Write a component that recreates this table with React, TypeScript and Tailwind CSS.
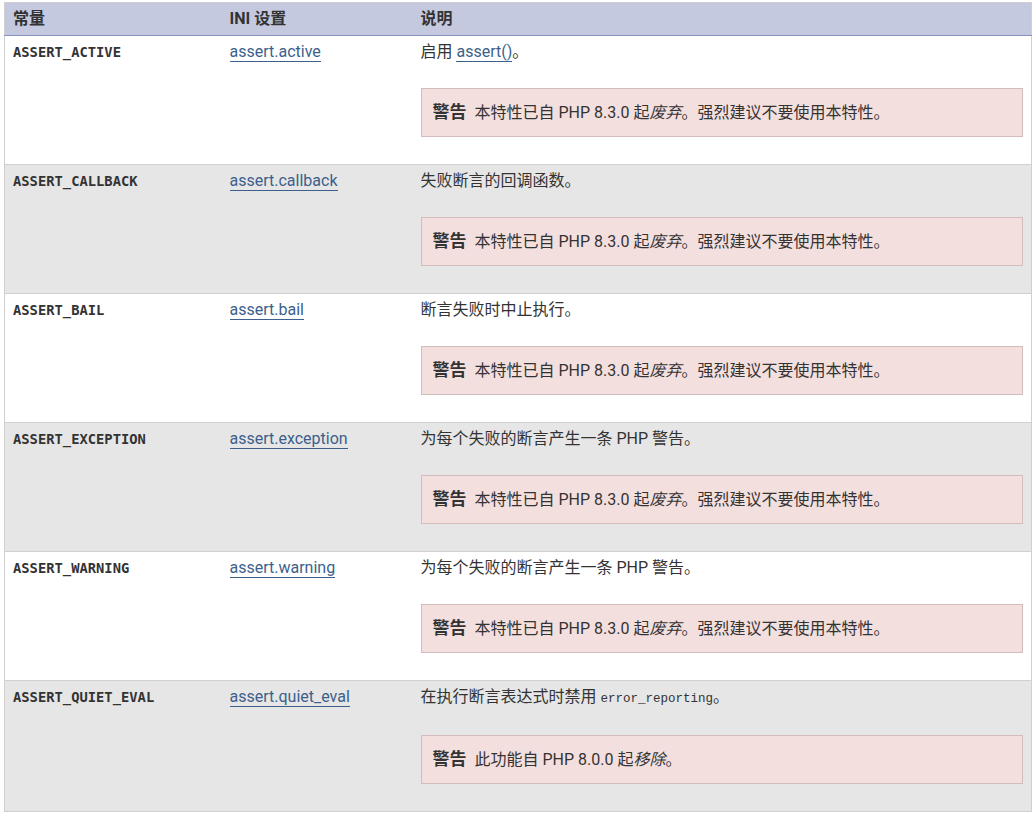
import React from 'react';

interface Row {
  name: string;
  ini: string;
  desc: React.ReactNode;
  warning: React.ReactNode;
}

const deprecated = (
  <>
    本特性已自 PHP 8.3.0 起<em>废弃</em>。强烈建议不要使用本特性。
  </>
);

const rows: Row[] = [
  {
    name: 'ASSERT_ACTIVE',
    ini: 'assert.active',
    desc: (
      <>
        启用 <Link>assert()</Link>。
      </>
    ),
    warning: deprecated,
  },
  { name: 'ASSERT_CALLBACK', ini: 'assert.callback', desc: '失败断言的回调函数。', warning: deprecated },
  { name: 'ASSERT_BAIL', ini: 'assert.bail', desc: '断言失败时中止执行。', warning: deprecated },
  { name: 'ASSERT_EXCEPTION', ini: 'assert.exception', desc: '为每个失败的断言产生一条 PHP 警告。', warning: deprecated },
  { name: 'ASSERT_WARNING', ini: 'assert.warning', desc: '为每个失败的断言产生一条 PHP 警告。', warning: deprecated },
  {
    name: 'ASSERT_QUIET_EVAL',
    ini: 'assert.quiet_eval',
    desc: (
      <>
        在执行断言表达式时禁用{' '}
        <code className="text-[12.5px] font-['Liberation_Mono',monospace]">error_reporting</code>。
      </>
    ),
    warning: (
      <>
        此功能自 PHP 8.0.0 起<em>移除</em>。
      </>
    ),
  },
];

function Link({ children }: { children: React.ReactNode }) {
  return <a className="text-[#3d5f8c] border-b border-[#3d5f8c] cursor-pointer">{children}</a>;
}

export default function App() {
  return (
    <div className="min-h-screen bg-white pt-[2px] pl-[4px] font-['Roboto','Noto_Sans_CJK_SC',sans-serif] text-[16px] leading-6 text-[#333]">
      <table className="w-[1028px] table-fixed border-collapse border border-[#d0d0d0]">
        <colgroup>
          <col className="w-[217px]" />
          <col className="w-[191px]" />
          <col />
        </colgroup>
        <thead>
          <tr className="bg-[#c4c9df] border-b border-[#8892bf]">
            <th className="text-left font-bold px-[8px] py-[4px]">常量</th>
            <th className="text-left font-bold px-[8px] py-[4px]">INI 设置</th>
            <th className="text-left font-bold px-[8px] py-[4px]">说明</th>
          </tr>
        </thead>
        <tbody>
          {rows.map((row, i) => (
            <tr
              key={row.name}
              className={`border-b border-[#d0d0d0] align-top ${i % 2 === 1 ? 'bg-[#e6e6e6]' : 'bg-white'}`}
            >
              <td className="px-[8px] pt-[4px] pb-[3px]">
                <strong className="text-[13.8px] font-bold font-['DejaVu_Sans_Mono',monospace]">{row.name}</strong>
              </td>
              <td className="px-[8px] pt-[4px] pb-[3px]">
                <Link>{row.ini}</Link>
              </td>
              <td className="pl-[8px] pr-[8px] pt-[4px] pb-[3px]">
                <p>{row.desc}</p>
                <div className="my-6 bg-[#f4dfdf] border border-[#d3bcbc] p-[11px]">
                  <strong className="text-[17px] font-bold mr-[8px]">警告</strong>
                  {row.warning}
                </div>
              </td>
            </tr>
          ))}
        </tbody>
      </table>
    </div>
  );
}
